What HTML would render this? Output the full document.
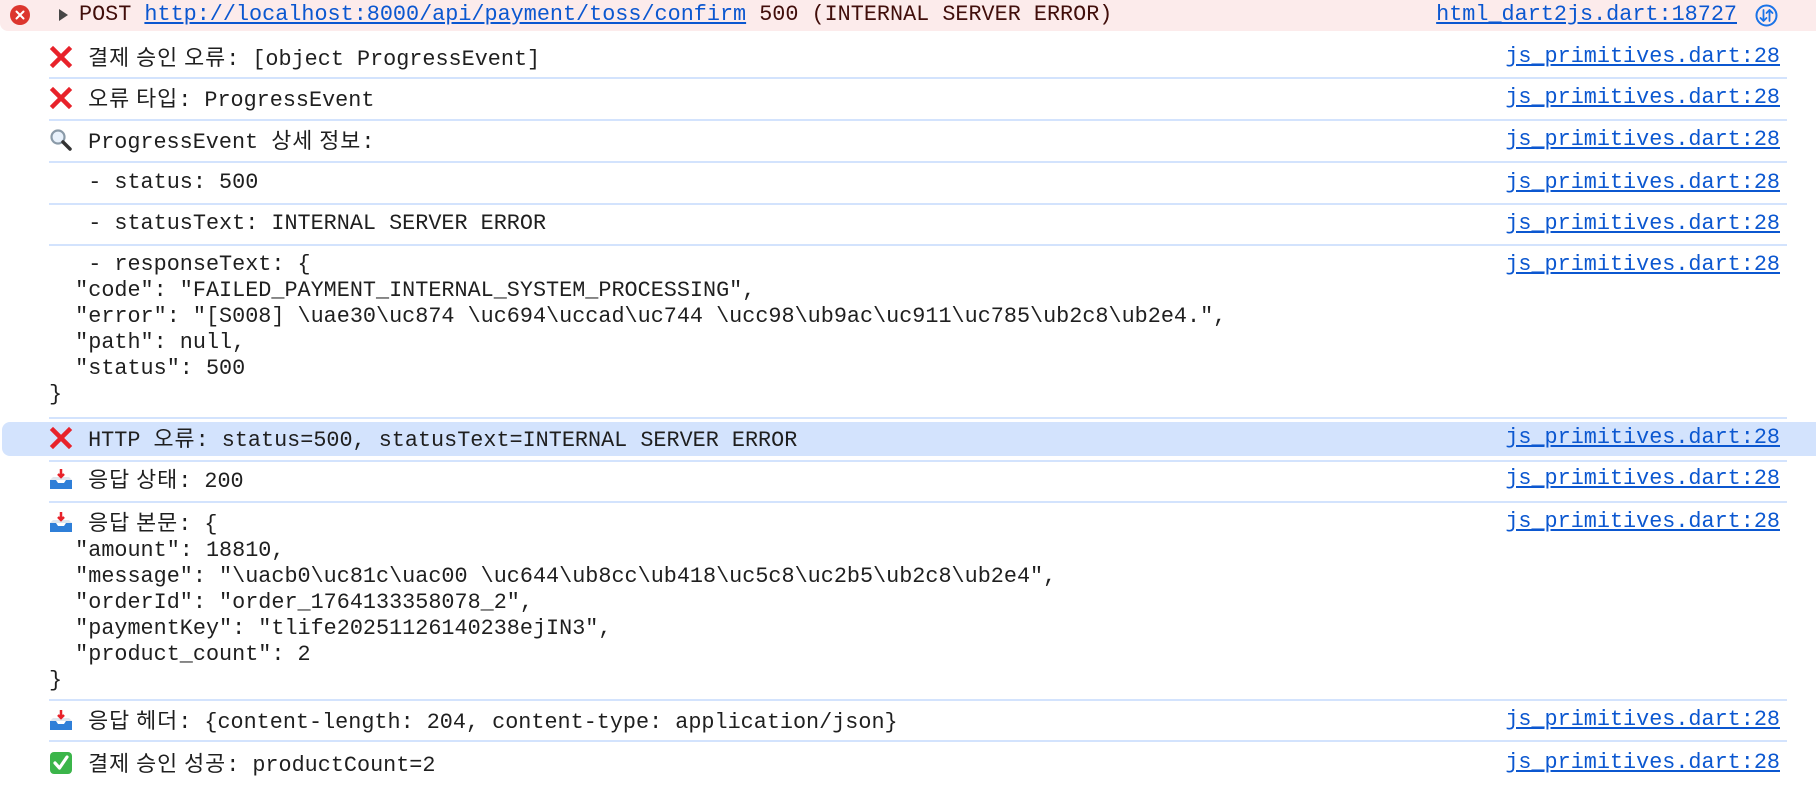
<!DOCTYPE html>
<html><head><meta charset="utf-8"><style>
html,body{margin:0;padding:0;width:1816px;height:788px;overflow:hidden;background:#fff;}
body{position:relative;font-family:"Liberation Mono","Noto Sans CJK KR",monospace;font-size:21.8px;color:#1f1f1f;}
.r{position:absolute;left:49px;white-space:pre;line-height:26px;}
.k{font-family:"Noto Sans CJK KR","Liberation Mono",monospace;letter-spacing:1px;}
.sep{position:absolute;left:49px;width:1738px;height:2px;background:#d3e3fd;}
.lk{position:absolute;right:36px;color:#0b57d0;text-decoration:underline;white-space:pre;line-height:26px;}
.ic{display:inline-block;width:26px;height:26px;vertical-align:top;position:relative;}
.ic svg{position:absolute;left:0;top:1px;}
</style></head><body>
<div style="position:absolute;left:0;top:0;width:1816px;height:31px;background:#fcebeb;border-radius:0 0 0 8px;"></div>
<svg style="position:absolute;left:9px;top:4px" width="22" height="22" viewBox="0 0 22 22"><circle cx="11" cy="11" r="10" fill="#dc362e"/><path d="M7.5 7.5L14.5 14.5M14.5 7.5L7.5 14.5" stroke="#fff" stroke-width="2" stroke-linecap="round"/></svg>
<svg style="position:absolute;left:57px;top:8px" width="12" height="14" viewBox="0 0 12 14"><path d="M2 1L11 7L2 13Z" fill="#474747"/></svg>
<div class="r" style="left:79px;top:2px;color:#410e0b;">POST <span style="color:#0b57d0;text-decoration:underline">http://localhost:8000/api/payment/toss/confirm</span> 500 (INTERNAL SERVER ERROR)</div>
<div class="lk" style="top:2px;right:79px;">html_dart2js.dart:18727</div>
<svg style="position:absolute;left:1755px;top:4px" width="23" height="23" viewBox="0 0 23 23"><circle cx="11.5" cy="11.5" r="10" fill="none" stroke="#1a73e8" stroke-width="2"/><path d="M8.5 6V17M5.5 14L8.5 17L11.5 14M14.5 17V6M11.5 9L14.5 6L17.5 9" fill="none" stroke="#1a73e8" stroke-width="1.8" stroke-linecap="round" stroke-linejoin="round"/></svg>

<div class="r" style="top:44px"><span class="ic"><svg width="24" height="24" viewBox="0 0 24 24"><path d="M4 4L20 20M20 4L4 20" stroke="#e8222a" stroke-width="4.5" stroke-linecap="square"/></svg></span> <span class="k">결제 승인 오류</span>: [object ProgressEvent]</div>
<div class="lk" style="top:44px">js_primitives.dart:28</div>
<div class="sep" style="top:77px"></div>

<div class="r" style="top:85px"><span class="ic"><svg width="24" height="24" viewBox="0 0 24 24"><path d="M4 4L20 20M20 4L4 20" stroke="#e8222a" stroke-width="4.5" stroke-linecap="square"/></svg></span> <span class="k">오류 타입</span>: ProgressEvent</div>
<div class="lk" style="top:85px">js_primitives.dart:28</div>
<div class="sep" style="top:119px"></div>

<div class="r" style="top:127px"><span class="ic"><svg width="24" height="24" viewBox="0 0 24 24"><circle cx="9" cy="9" r="6.5" fill="#e8f1fb" stroke="#8a9aa8" stroke-width="2.2"/><path d="M14 14L21 21" stroke="#333" stroke-width="3.5" stroke-linecap="round"/></svg></span> ProgressEvent <span class="k">상세 정보</span>:</div>
<div class="lk" style="top:127px">js_primitives.dart:28</div>
<div class="sep" style="top:161px"></div>

<div class="r" style="top:170px">   - status: 500</div>
<div class="lk" style="top:170px">js_primitives.dart:28</div>
<div class="sep" style="top:203px"></div>

<div class="r" style="top:211px">   - statusText: INTERNAL SERVER ERROR</div>
<div class="lk" style="top:211px">js_primitives.dart:28</div>
<div class="sep" style="top:244px"></div>

<div class="r" style="top:252px">   - responseText: {
  "code": "FAILED_PAYMENT_INTERNAL_SYSTEM_PROCESSING",
  "error": "[S008] \uae30\uc874 \uc694\uccad\uc744 \ucc98\ub9ac\uc911\uc785\ub2c8\ub2e4.",
  "path": null,
  "status": 500
}</div>
<div class="lk" style="top:252px">js_primitives.dart:28</div>
<div class="sep" style="top:417px"></div>

<div style="position:absolute;left:2px;top:422px;width:1814px;height:34px;background:#d3e3fd;border-radius:8px 0 0 8px;"></div>
<div class="r" style="top:425px"><span class="ic"><svg width="24" height="24" viewBox="0 0 24 24"><path d="M4 4L20 20M20 4L4 20" stroke="#e8222a" stroke-width="4.5" stroke-linecap="square"/></svg></span> HTTP <span class="k">오류</span>: status=500, statusText=INTERNAL SERVER ERROR</div>
<div class="lk" style="top:425px">js_primitives.dart:28</div>
<div class="sep" style="top:460px"></div>

<div class="r" style="top:466px"><span class="ic"><svg width="24" height="24" viewBox="0 0 24 24"><path d="M1 13H7L9 16H15L17 13H23V22H1Z" fill="#2f7fd8"/><path d="M1 13L4 10H20L23 13" fill="#dfe6ee"/><path d="M12 2V10M9 7L12 10L15 7" stroke="#e8222a" stroke-width="2.5" fill="none"/></svg></span> <span class="k">응답 상태</span>: 200</div>
<div class="lk" style="top:466px">js_primitives.dart:28</div>
<div class="sep" style="top:501px"></div>

<div class="r" style="top:509px"><span class="ic"><svg width="24" height="24" viewBox="0 0 24 24"><path d="M1 13H7L9 16H15L17 13H23V22H1Z" fill="#2f7fd8"/><path d="M1 13L4 10H20L23 13" fill="#dfe6ee"/><path d="M12 2V10M9 7L12 10L15 7" stroke="#e8222a" stroke-width="2.5" fill="none"/></svg></span> <span class="k">응답 본문</span>: {
  "amount": 18810,
  "message": "\uacb0\uc81c\uac00 \uc644\ub8cc\ub418\uc5c8\uc2b5\ub2c8\ub2e4",
  "orderId": "order_1764133358078_2",
  "paymentKey": "tlife20251126140238ejIN3",
  "product_count": 2
}</div>
<div class="lk" style="top:509px">js_primitives.dart:28</div>
<div class="sep" style="top:699px"></div>

<div class="r" style="top:707px"><span class="ic"><svg width="24" height="24" viewBox="0 0 24 24"><path d="M1 13H7L9 16H15L17 13H23V22H1Z" fill="#2f7fd8"/><path d="M1 13L4 10H20L23 13" fill="#dfe6ee"/><path d="M12 2V10M9 7L12 10L15 7" stroke="#e8222a" stroke-width="2.5" fill="none"/></svg></span> <span class="k">응답 헤더</span>: {content-length: 204, content-type: application/json}</div>
<div class="lk" style="top:707px">js_primitives.dart:28</div>
<div class="sep" style="top:740px"></div>

<div class="r" style="top:750px"><span class="ic"><svg width="24" height="24" viewBox="0 0 24 24"><rect x="1" y="1" width="22" height="22" rx="4" fill="#3bb54a"/><path d="M6 12L10.5 17L18 6" stroke="#fff" stroke-width="3.2" fill="none" stroke-linecap="round" stroke-linejoin="round"/></svg></span> <span class="k">결제 승인 성공</span>: productCount=2</div>
<div class="lk" style="top:750px">js_primitives.dart:28</div>
</body></html>
